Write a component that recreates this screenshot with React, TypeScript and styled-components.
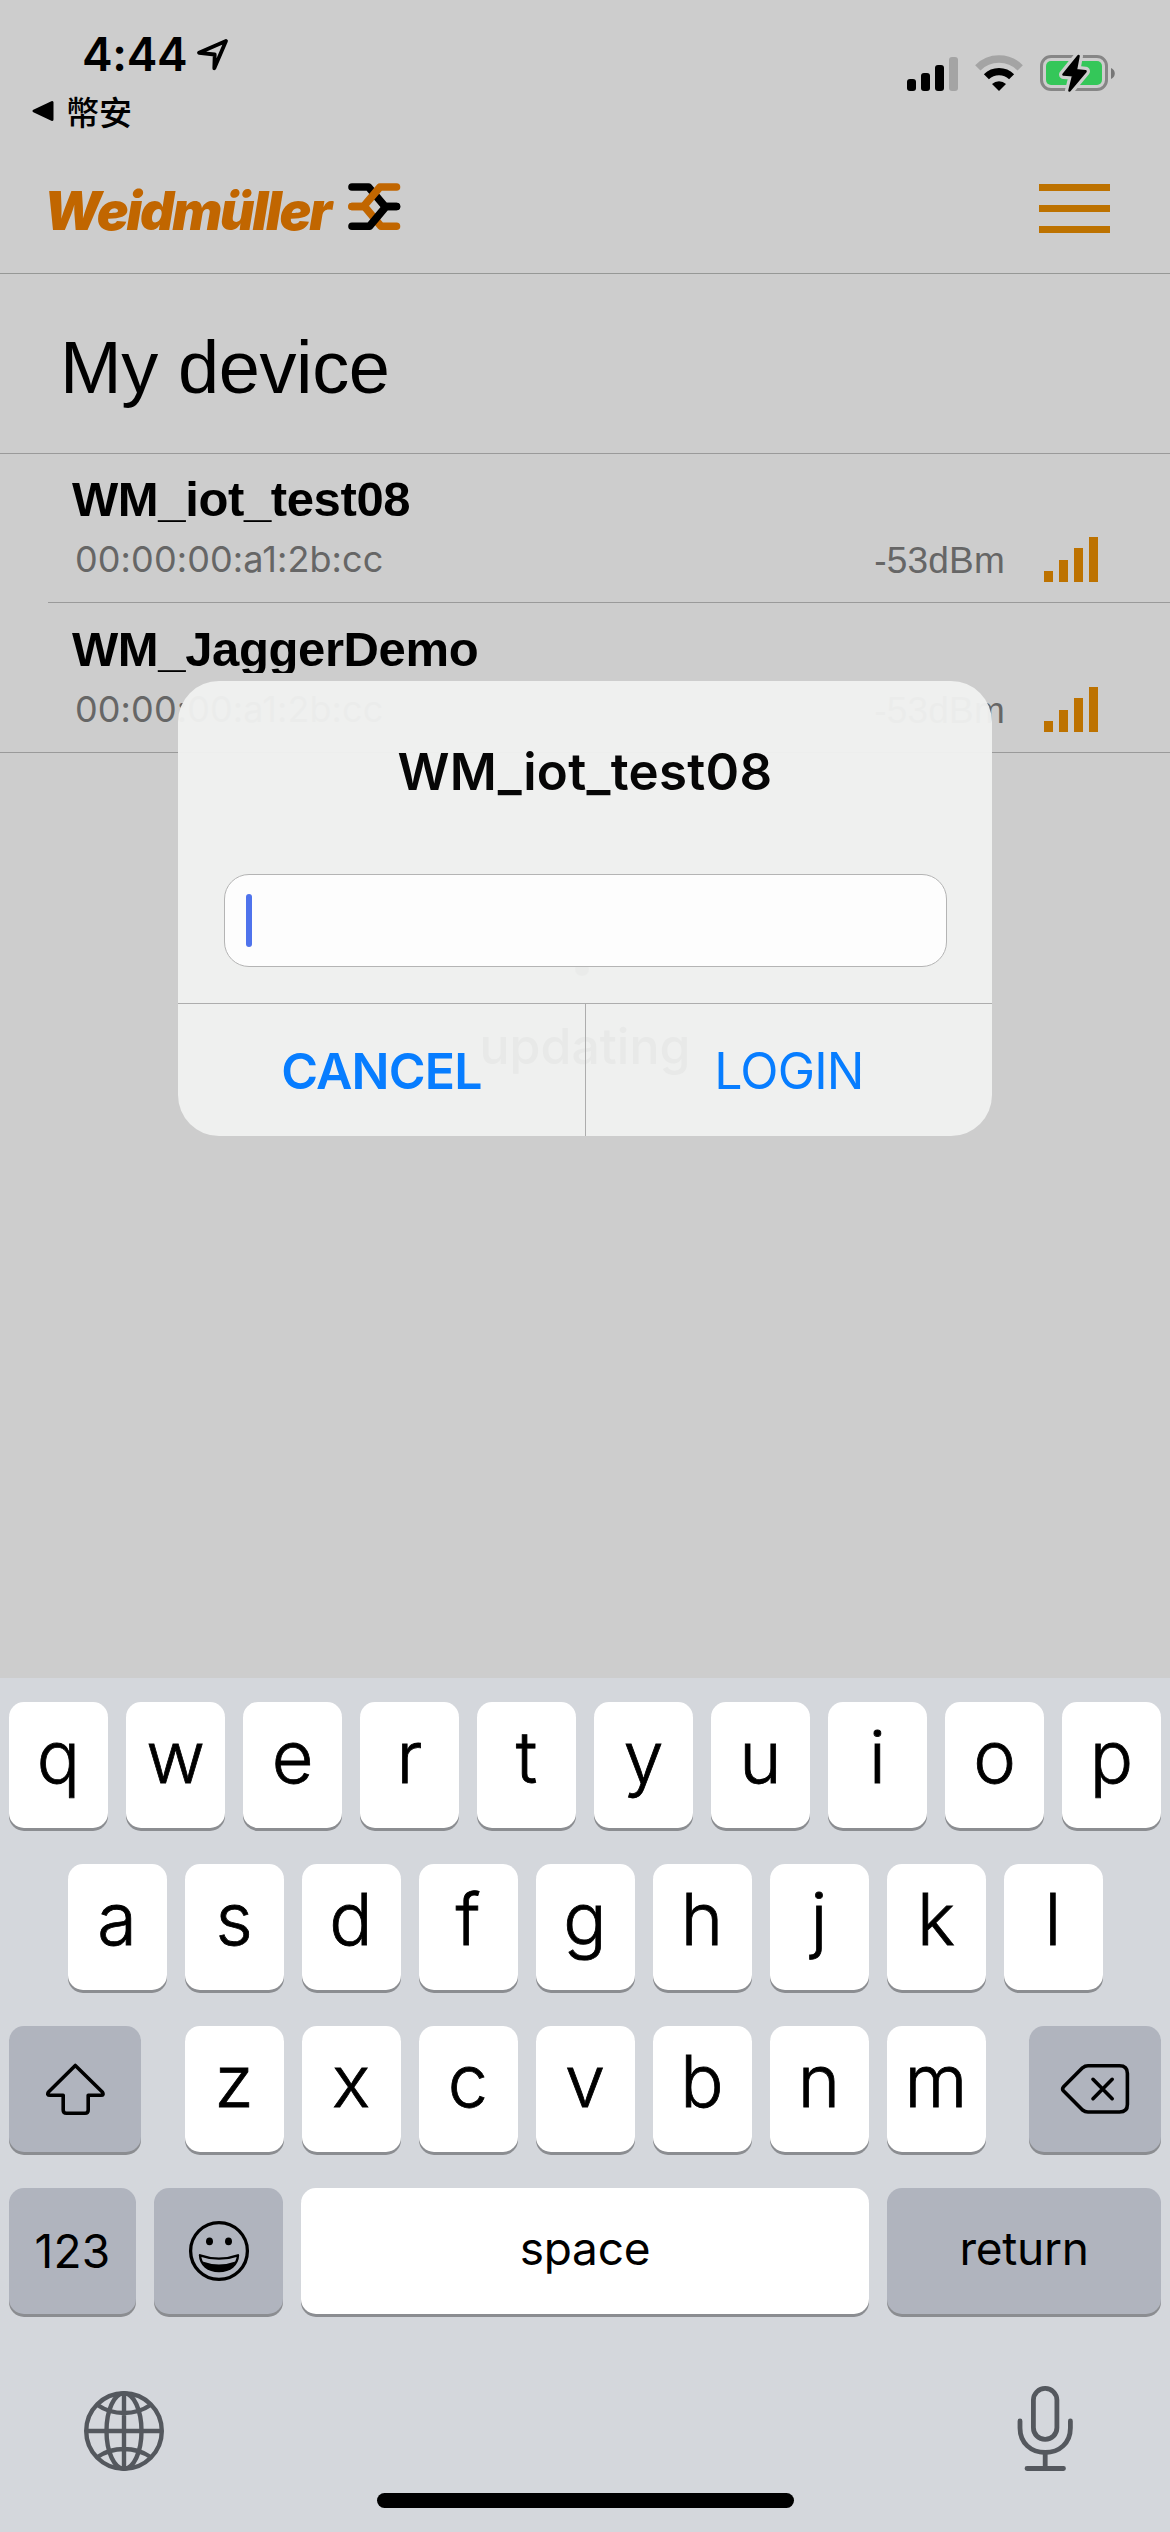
import React from "react";
import styled, { createGlobalStyle } from "styled-components";

const GlobalStyle = createGlobalStyle`
  *, *::before, *::after { box-sizing: border-box; }
  body { margin: 0; background: #cdcdcd; }
`;

const sans = `Inter, Roboto, "Noto Sans CJK TC", sans-serif`;
const helvetica = `"Liberation Sans", Arial, sans-serif`;
const orange = "#c16600";
const amber = "#bd7200";

const Screen = styled.div`
  position: relative;
  display: flex;
  flex-direction: column;
  width: 1170px;
  height: 2532px;
  overflow: hidden;
  background: #cdcdcd;
  color: #000;
  font-family: ${sans};
`;

const StatusBar = styled.div`
  display: flex;
  justify-content: space-between;
  height: 141px;
  padding: 30px 55px 0 32px;
`;

const StatusLeft = styled.div`
  display: flex;
  flex-direction: column;
`;

const ClockRow = styled.div`
  display: flex;
  align-items: center;
  gap: 9px;
  height: 48px;
  padding-left: 50px;
`;

const Clock = styled.span`
  font-size: 46px;
  font-weight: 600;
  line-height: 48px;
  letter-spacing: -0.3px;
`;

const BackRow = styled.div`
  display: flex;
  align-items: center;
  gap: 12px;
  height: 40px;
  margin-top: 13px;
`;

const BackLabel = styled.span`
  font-family: "Noto Sans CJK TC", sans-serif;
  font-size: 33px;
  font-weight: 500;
  line-height: 40px;
`;

const StatusRight = styled.div`
  display: flex;
  align-items: flex-end;
  height: 63px;
`;

const CellBars = styled.div`
  display: flex;
  align-items: flex-end;
  gap: 5px;
  margin: 0 17px 2px 0;
`;

const CellBar = styled.i<{ $h: number; $dim?: boolean }>`
  width: 9px;
  height: ${(p) => p.$h}px;
  border-radius: 3px;
  background: ${(p) => (p.$dim ? "#a4a4a4" : "#000")};
`;

const Header = styled.header`
  display: flex;
  align-items: center;
  justify-content: space-between;
  height: 133px;
  padding: 0 60px 0 44px;
  border-bottom: 1px solid #969896;
`;

const Brand = styled.div`
  display: flex;
  align-items: center;
`;

const BrandName = styled.span`
  width: 304px;
  padding-top: 8px;
  font-size: 53px;
  font-style: italic;
  font-weight: 900;
  line-height: 60px;
  letter-spacing: -2.1px;
  white-space: nowrap;
  color: ${orange};
`;

const MenuButton = styled.button`
  display: flex;
  flex-direction: column;
  gap: 14px;
  width: 71px;
  padding: 0;
  margin-top: 2px;
  border: 0;
  background: none;
`;

const MenuLine = styled.span`
  height: 7px;
  background: ${amber};
`;

const TitleBar = styled.div`
  height: 180px;
  padding: 54px 60px 0;
  border-bottom: 1px solid #9a9a9a;
`;

const Title = styled.h1`
  margin: 0;
  font-family: ${helvetica};
  font-size: 74px;
  font-weight: 400;
  line-height: 80px;
  letter-spacing: -0.4px;
`;

const DeviceRow = styled.div<{ $last?: boolean }>`
  display: flex;
  justify-content: space-between;
  height: ${(p) => (p.$last ? 150 : 149)}px;
  margin-left: ${(p) => (p.$last ? 0 : 48)}px;
  padding: ${(p) => (p.$last ? 23 : 22)}px 72px 0 ${(p) => (p.$last ? 72 : 24)}px;
  border-bottom: 1px solid #9a9a9a;
`;

const DeviceName = styled.div<{ $clip?: boolean }>`
  height: 47px;
  overflow: ${(p) => (p.$clip ? "hidden" : "visible")};
  font-family: ${helvetica};
  font-size: 49px;
  font-weight: 700;
  line-height: 47px;
  letter-spacing: -0.38px;
`;

const DeviceMac = styled.div`
  margin-top: 17px;
  padding-left: 3px;
  font-size: 36px;
  line-height: 38px;
  letter-spacing: 0.1px;
  color: #666;
`;

const DeviceMeta = styled.div`
  display: flex;
  align-items: flex-end;
  height: 106px;
`;

const Dbm = styled.span`
  margin: 0 39px 2px 0;
  font-family: ${helvetica};
  font-size: 37px;
  line-height: 38px;
  letter-spacing: 0.2px;
  color: #666;
`;

const RssiBars = styled.div`
  display: flex;
  align-items: flex-end;
  gap: 6px;
`;

const RssiBar = styled.i<{ $h: number }>`
  width: 9px;
  height: ${(p) => p.$h}px;
  background: ${amber};
`;

const Body = styled.main`
  flex: 1;
  display: flex;
  flex-direction: column;
  align-items: center;
  padding-top: 209px;
`;

const SpinnerDot = styled.i`
  width: 14px;
  height: 14px;
  margin-right: 6px;
  border-radius: 50%;
  background: #555;
`;

const Updating = styled.div`
  margin-top: 40px;
  font-size: 50px;
  font-weight: 500;
  line-height: 60px;
`;

const Alert = styled.div`
  position: absolute;
  top: 681px;
  left: 178px;
  display: flex;
  flex-direction: column;
  width: 814px;
  height: 455px;
  border-radius: 41px;
  overflow: hidden;
  background: rgba(240, 241, 240, 0.97);
`;

const AlertBody = styled.div`
  display: flex;
  flex-direction: column;
  align-items: center;
  height: 322px;
  padding-top: 60px;
`;

const AlertTitle = styled.div`
  font-size: 51px;
  font-weight: 600;
  line-height: 62px;
  letter-spacing: 0.3px;
  color: #060606;
`;

const Field = styled.div`
  display: flex;
  align-items: center;
  width: 723px;
  height: 93px;
  margin-top: 71px;
  padding-left: 21px;
  border: 1px solid #b4b4b4;
  border-radius: 25px;
  background: #fdfdfd;
`;

const Caret = styled.i`
  width: 6px;
  height: 53px;
  border-radius: 3px;
  background: #4f73ec;
`;

const AlertActions = styled.div`
  display: grid;
  grid-template-columns: 408px 1fr;
  flex: 1;
  border-top: 1px solid #adadad;
`;

const Action = styled.button<{ $strong?: boolean }>`
  padding: 2px 0 0;
  border: 0;
  border-right: ${(p) => (p.$strong ? "1px solid #adadad" : "0")};
  background: none;
  font-family: ${sans};
  font-size: 50px;
  font-weight: ${(p) => (p.$strong ? 600 : 400)};
  letter-spacing: -0.8px;
  color: #077dff;
`;

const Keyboard = styled.div`
  display: flex;
  flex-direction: column;
  height: 854px;
  padding: 24px 9px 0;
  background: #d4d7dc;
`;

const KeyRow = styled.div<{ $spread?: boolean }>`
  display: flex;
  justify-content: ${(p) => (p.$spread ? "space-between" : "center")};
  gap: 18px;
  height: 126px;
  margin-bottom: 36px;
`;

const LetterGroup = styled.div`
  display: flex;
  gap: 18px;
`;

const Key = styled.button<{ $w?: number; $dark?: boolean }>`
  display: flex;
  align-items: center;
  justify-content: center;
  flex: none;
  width: ${(p) => p.$w ?? 99}px;
  height: 126px;
  padding: 0;
  border: 0;
  border-radius: 15px;
  background: ${(p) => (p.$dark ? "#b0b4be" : "#fff")};
  box-shadow: 0 3px 0 #8b8d91;
  color: #000;
`;

const Letter = styled.span`
  padding-bottom: 16px;
  font-family: ${sans};
  font-size: 72px;
  font-weight: 300;
  line-height: 90px;
  -webkit-text-stroke: 0.8px #000;
`;

const Word = styled.span<{ $lift?: number }>`
  padding-bottom: ${(p) => p.$lift ?? 0}px;
  font-family: ${sans};
  font-size: 46px;
  font-weight: 400;
  line-height: 60px;
  letter-spacing: ${(p) => (p.$lift ? -0.3 : 0.2)}px;
`;

const Dock = styled.div`
  display: flex;
  justify-content: space-between;
  height: 92px;
  margin-top: 31px;
  padding: 0 85px 0 73px;
`;

const HomeIndicator = styled.div`
  width: 417px;
  height: 15px;
  margin: 20px auto 0;
  border-radius: 8px;
  background: #000;
`;

const LocationIcon = () => (
  <svg width="34" height="34" viewBox="197 35 34 34" fill="none" stroke="#000" strokeWidth="3.8" strokeLinejoin="round">
    <path d="M227 39 L200 50.8 L215.7 52.5 L215.3 66.3 Z" />
  </svg>
);

const BackTriangle = () => (
  <svg width="22" height="22" viewBox="0 0 22 22" stroke="#000" strokeWidth="3" strokeLinejoin="round">
    <path d="M2 11 L20 2.5 V19.5 Z" />
  </svg>
);

const WifiIcon = () => (
  <svg width="48" height="37" viewBox="975 55 48 37" fill="none" style={{ marginRight: 17, marginBottom: 1 }}>
    <path d="M977.8 67.8 A30 30 0 0 1 1020.2 67.8" stroke="#a4a4a4" strokeWidth="7.5" />
    <path d="M986.4 76.8 A18 18 0 0 1 1011.6 76.8" stroke="#000" strokeWidth="7.2" />
    <path d="M999 91 L992 84 A10.5 10.5 0 0 1 1006 84 Z" fill="#000" />
  </svg>
);

const BatteryIcon = () => (
  <svg width="75" height="40" viewBox="1040 54 75 40">
    <rect x="1041.5" y="57.5" width="65" height="33" rx="9.5" fill="none" stroke="#868686" strokeWidth="3" />
    <path d="M1111 69 C1116 71 1116 78 1111 80 Z" fill="#777" />
    <rect x="1046" y="62" width="56" height="24" rx="5" fill="#34c759" />
    <g strokeLinejoin="round">
      <path d="M1078.5 57 L1063.5 75.5 L1073.3 76.3 L1069.5 91.5 L1085.5 72.3 L1075.8 71.2 Z" fill="#cdcdcd" stroke="#cdcdcd" strokeWidth="9" />
      <path d="M1078.5 57 L1063.5 75.5 L1073.3 76.3 L1069.5 91.5 L1085.5 72.3 L1075.8 71.2 Z" fill="#000" stroke="#000" strokeWidth="2.6" />
    </g>
  </svg>
);

const BrandMark = () => (
  <svg width="53" height="48" viewBox="348 183 53 48" fill="none" strokeWidth="7.6" strokeLinecap="round" strokeLinejoin="round">
    <path d="M352 187 H368.5 L385 206.5 H396.5" stroke="#000" />
    <path d="M396.5 226.3 H381 L364.5 206.5 H352" stroke={orange} />
    <path d="M396.5 187 H380 L363.500 206.5 H352" stroke={orange} />
    <path d="M352 226.3 H369.5 L386 206.5 H396.5" stroke="#000" />
  </svg>
);

const ShiftIcon = () => (
  <svg width="60" height="54" viewBox="45 2062 60 54" fill="none" stroke="#000" strokeWidth="3.6" strokeLinejoin="round">
    <path d="M75.3 2065.5 L48.5 2092 Q46.5 2095.3 50 2095.3 H63.2 V2110 Q63.2 2113.3 66.5 2113.3 H85 Q88.2 2113.3 88.2 2110 V2095.3 H101 Q104.3 2095.3 102.3 2092 Z" />
  </svg>
);

const DeleteIcon = () => (
  <svg width="70" height="52" viewBox="1059 2063 70 52" fill="none" stroke="#000" strokeWidth="3.6" strokeLinecap="round" strokeLinejoin="round">
    <path d="M1062.6 2086.8 L1081.5 2067.8 Q1084 2065.8 1087 2065.8 H1118.5 Q1126.4 2065.8 1126.4 2073.5 V2104.5 Q1126.4 2112 1118.5 2112 H1087 Q1084 2112 1081.5 2110 L1062.6 2091 Q1060.7 2088.9 1062.6 2086.8 Z" />
    <path d="M1092 2079.3 L1111.2 2098.7 M1111.2 2079.3 L1092 2098.7" />
  </svg>
);

const EmojiIcon = () => (
  <svg width="62" height="62" viewBox="187 2220 62 62" fill="none" stroke="#000">
    <circle cx="218" cy="2251" r="28.4" strokeWidth="3.3" />
    <ellipse cx="208.5" cy="2241.3" rx="3.5" ry="3.9" fill="#000" stroke="none" />
    <ellipse cx="227.5" cy="2241.3" rx="3.5" ry="3.9" fill="#000" stroke="none" />
    <path d="M199 2255.3 Q218 2262 237 2255.3 C236.5 2265 229 2271 218 2271 C207 2271 199.5 2265 199 2255.3 Z" strokeWidth="2.4" strokeLinejoin="round" />
    <path d="M201.5 2261.5 Q218 2267.5 234.5 2261.5 C231.5 2268.5 225.5 2271 218 2271 C210.5 2271 204.5 2268.5 201.5 2261.5 Z" fill="#000" stroke="none" />
  </svg>
);

const GlobeIcon = () => (
  <svg width="82" height="82" viewBox="0 0 82 82" fill="none" stroke="#54585e" strokeWidth="4.4" style={{ marginTop: 9, marginLeft: 1 }}>
    <circle cx="41" cy="41" r="37.8" />
    <ellipse cx="41" cy="41" rx="17.5" ry="37.8" />
    <path d="M41 3 V79 M3 41 H79 M14.5 15 Q26 23 41 23 T67.5 15 M14.5 67 Q26 59 41 59 T67.5 67" />
  </svg>
);

const MicIcon = () => (
  <svg width="58" height="88" viewBox="0 0 58 88" fill="none" stroke="#54585e" strokeWidth="4.8" strokeLinecap="round" style={{ marginTop: 4, marginRight: 1 }}>
    <rect x="16.4" y="3.4" width="23.5" height="51" rx="11.7" />
    <path d="M3 36 V43 C3 58 14 67.5 28.2 67.5 C42.4 67.5 53.4 58 53.4 43 V36 M28.2 67.5 V83.5 M10 83.5 H46.5" />
  </svg>
);

const devices = [
  { name: "WM_iot_test08", mac: "00:00:00:a1:2b:cc", dbm: "-53dBm" },
  { name: "WM_JaggerDemo", mac: "00:00:00:a1:2b:cc", dbm: "-53dBm" },
];

const Letters = ({ keys }: { keys: string }) => (
  <>
    {keys.split("").map((k) => (
      <Key key={k}>
        <Letter>{k}</Letter>
      </Key>
    ))}
  </>
);

export default function App() {
  return (
    <>
      <GlobalStyle />
      <Screen>
        <StatusBar>
          <StatusLeft>
            <ClockRow>
              <Clock>4:44</Clock>
              <LocationIcon />
            </ClockRow>
            <BackRow>
              <BackTriangle />
              <BackLabel>幣安</BackLabel>
            </BackRow>
          </StatusLeft>
          <StatusRight>
            <CellBars>
              <CellBar $h={12} />
              <CellBar $h={18} />
              <CellBar $h={26} />
              <CellBar $h={34} $dim />
            </CellBars>
            <WifiIcon />
            <BatteryIcon />
          </StatusRight>
        </StatusBar>

        <Header>
          <Brand>
            <BrandName>Weidmüller</BrandName>
            <BrandMark />
          </Brand>
          <MenuButton aria-label="Menu">
            <MenuLine />
            <MenuLine />
            <MenuLine />
          </MenuButton>
        </Header>

        <TitleBar>
          <Title>My device</Title>
        </TitleBar>

        {devices.map((d, i) => (
          <DeviceRow key={d.name} $last={i === devices.length - 1}>
            <div>
              <DeviceName $clip={i === devices.length - 1}>{d.name}</DeviceName>
              <DeviceMac>{d.mac}</DeviceMac>
            </div>
            <DeviceMeta>
              <Dbm>{d.dbm}</Dbm>
              <RssiBars>
                {[11, 22, 34, 45].map((h) => (
                  <RssiBar key={h} $h={h} />
                ))}
              </RssiBars>
            </DeviceMeta>
          </DeviceRow>
        ))}

        <Body>
          <SpinnerDot />
          <Updating>updating</Updating>
        </Body>

        <Keyboard>
          <KeyRow>
            <Letters keys="qwertyuiop" />
          </KeyRow>
          <KeyRow>
            <Letters keys="asdfghjkl" />
          </KeyRow>
          <KeyRow $spread>
            <Key $w={132} $dark aria-label="Shift">
              <ShiftIcon />
            </Key>
            <LetterGroup>
              <Letters keys="zxcvbnm" />
            </LetterGroup>
            <Key $w={132} $dark aria-label="Delete">
              <DeleteIcon />
            </Key>
          </KeyRow>
          <KeyRow $spread>
            <Key $w={127} $dark>
              <Word>123</Word>
            </Key>
            <Key $w={129} $dark aria-label="Emoji">
              <EmojiIcon />
            </Key>
            <Key $w={568}>
              <Word $lift={7}>space</Word>
            </Key>
            <Key $w={274} $dark>
              <Word $lift={7}>return</Word>
            </Key>
          </KeyRow>
          <Dock>
            <GlobeIcon />
            <MicIcon />
          </Dock>
          <HomeIndicator />
        </Keyboard>

        <Alert role="dialog">
          <AlertBody>
            <AlertTitle>WM_iot_test08</AlertTitle>
            <Field>
              <Caret />
            </Field>
          </AlertBody>
          <AlertActions>
            <Action $strong>CANCEL</Action>
            <Action>LOGIN</Action>
          </AlertActions>
        </Alert>
      </Screen>
    </>
  );
}
